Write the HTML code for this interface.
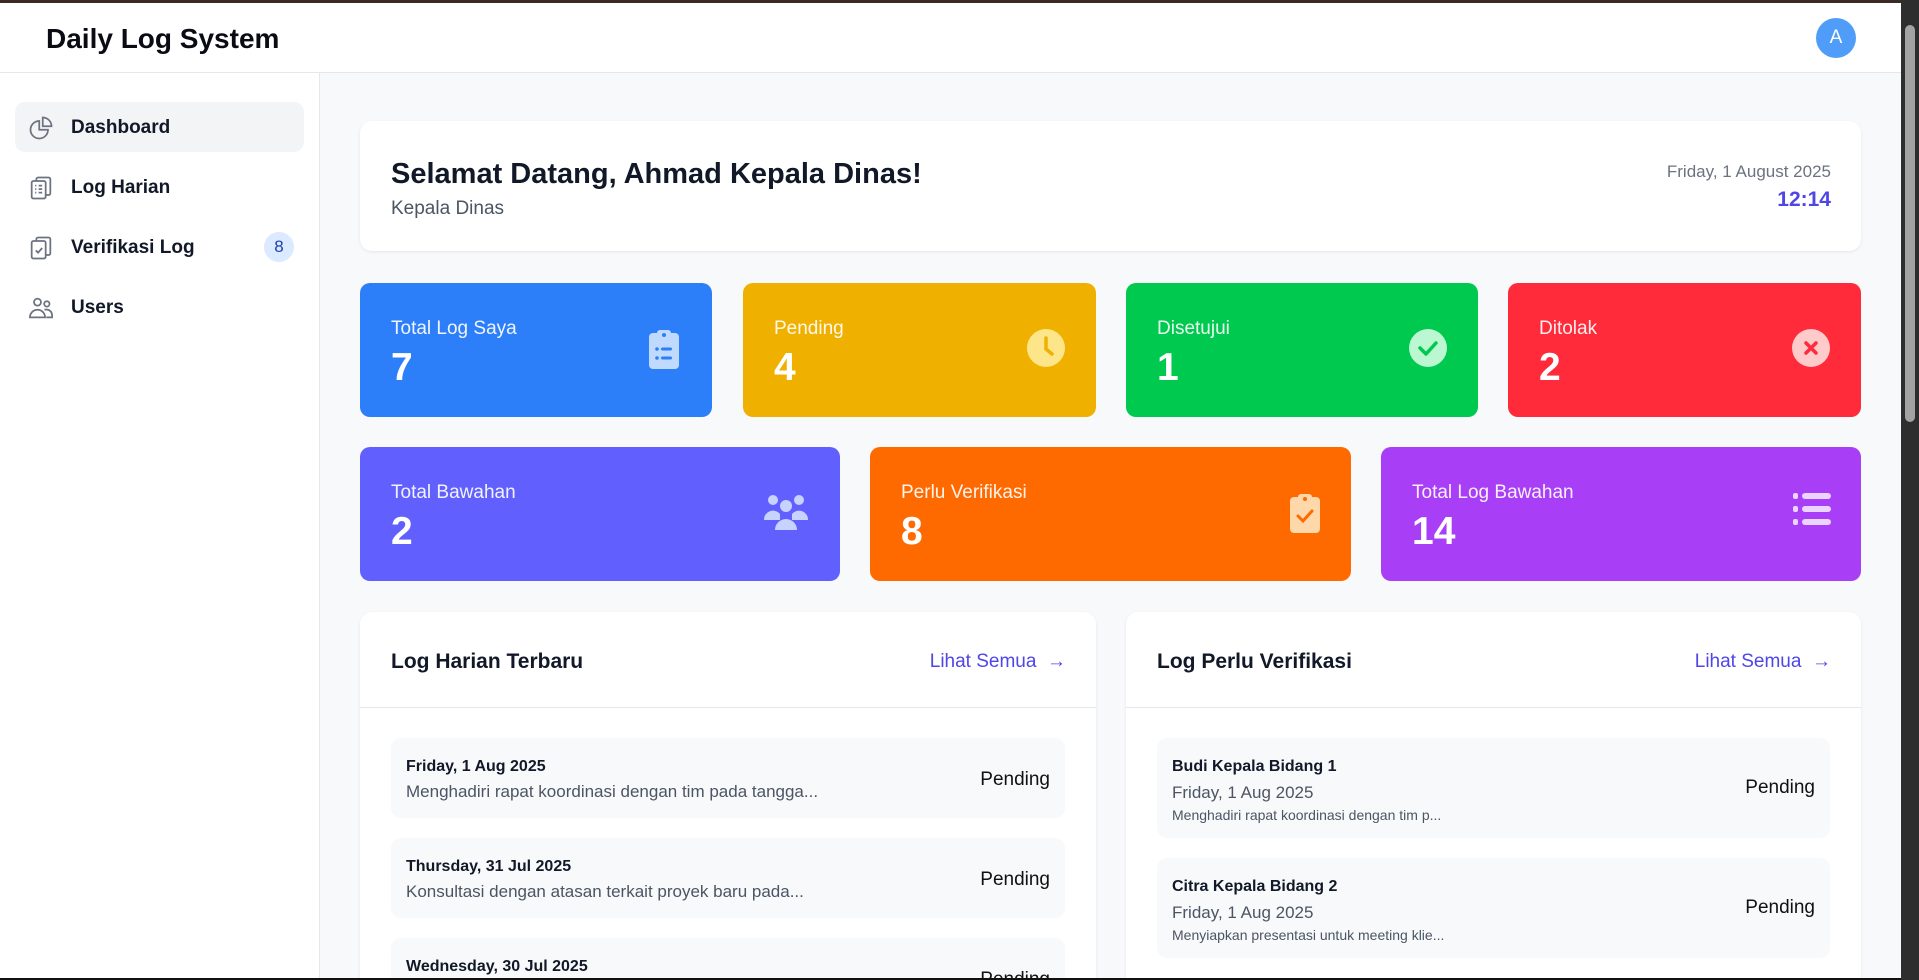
<!DOCTYPE html>
<html><head><meta charset="utf-8"><style>
*{box-sizing:border-box;margin:0;padding:0}
html,body{width:1919px;height:980px;overflow:hidden;font-family:"Liberation Sans",sans-serif;background:#f8f9fb;color:#111827}
#w{position:relative;width:1919px;height:980px;overflow:hidden}
.top{position:absolute;left:0;top:0;width:1901px;height:3px;background:#3a2a22}
.bot{position:absolute;left:0;bottom:0;width:1901px;height:2px;background:#111}
.header{position:absolute;left:0;top:3px;width:1901px;height:70px;background:#fff;border-bottom:1px solid #e5e7eb}
.header h1{position:absolute;left:46px;top:20px;font-size:28px;font-weight:600;color:#0b0b14}
.av{position:absolute;left:1816px;top:15px;width:40px;height:40px;border-radius:50%;background:#4f9cf9;color:#fff;font-size:19px;text-align:center;line-height:40px}
.sb{position:absolute;left:0;top:73px;width:320px;height:905px;background:#fff;border-right:1px solid #e5e7eb}
.nav{position:absolute;left:15px;width:289px;height:50px;border-radius:10px;font-size:19px;font-weight:600;color:#111827}
.nav span.t{position:absolute;left:56px;top:15px}
.nav svg{position:absolute;left:12px;top:12px}
.badge{position:absolute;right:10px;top:10px;width:30px;height:30px;border-radius:50%;background:#dbeafe;color:#1e40af;font-size:17px;text-align:center;line-height:30px;font-weight:400}
.scroll{position:absolute;left:1901px;top:0;width:18px;height:980px;background:#2e2e2e}
.thumb{position:absolute;left:1905px;top:25px;width:10px;height:397px;border-radius:5px;background:#a3a3a3}
.card{position:absolute;background:#fff;border-radius:12px;box-shadow:0 1px 3px rgba(0,0,0,.08);overflow:hidden}
.stat{position:absolute;border-radius:10px;color:#fff}
.stat .l{position:absolute;left:31px;top:35px;font-size:19px;opacity:.92}
.stat .n{position:absolute;left:31px;top:63px;font-size:39px;font-weight:700}
.stat svg{position:absolute;right:30px;top:45px}
.ph{position:absolute;left:0;top:0;right:0;height:96px;border-bottom:1px solid #e5e7eb}
.ph .t{position:absolute;left:31px;top:38px;font-size:21px;font-weight:600}
.ph .a{position:absolute;right:30px;top:39px;font-size:19px;color:#4f46e5}
.it{position:absolute;left:31px;right:31px;background:#f8f9fb;border-radius:10px}
.it .d{position:absolute;left:15px;font-size:16px;font-weight:700}
.it .s{position:absolute;left:15px;font-size:17px;color:#4b5563}
.it .p{position:absolute;right:15px;font-size:19px;color:#111}
</style></head><body><div id="w">
<div class="top"></div>
<div class="header"><h1>Daily Log System</h1><div class="av">A</div></div>
<div class="sb">
 <div class="nav" style="top:29px;background:#f3f4f6"><svg width="28" height="28" viewBox="0 0 24 24" fill="none" stroke="#6b7280" stroke-width="1.5"><path d="M10.5 6a7.5 7.5 0 1 0 7.5 7.5h-7.5V6z"/><path d="M13.5 10.5H21A7.5 7.5 0 0 0 13.5 3v7.5z"/></svg><span class="t">Dashboard</span></div>
 <div class="nav" style="top:89px"><svg width="28" height="28" viewBox="0 0 24 24" fill="none" stroke="#6b7280" stroke-width="1.5"><rect x="4" y="6" width="12" height="15" rx="1.5"/><path d="M8 6V4.5A1.5 1.5 0 0 1 9.5 3h9A1.5 1.5 0 0 1 20 4.5v12a1.5 1.5 0 0 1-1.5 1.5H16"/><path d="M7 10h1M10 10h3M7 13h1M10 13h3M7 16h1M10 16h3"/></svg><span class="t">Log Harian</span></div>
 <div class="nav" style="top:149px"><svg width="28" height="28" viewBox="0 0 24 24" fill="none" stroke="#6b7280" stroke-width="1.5"><rect x="4" y="6" width="12" height="15" rx="1.5"/><path d="M8 6V4.5A1.5 1.5 0 0 1 9.5 3h9A1.5 1.5 0 0 1 20 4.5v12a1.5 1.5 0 0 1-1.5 1.5H16"/><path d="M7.5 14l2 2 3.5-4"/></svg><span class="t">Verifikasi Log</span><div class="badge">8</div></div>
 <div class="nav" style="top:209px"><svg width="28" height="28" viewBox="0 0 24 24" fill="none" stroke="#6b7280" stroke-width="1.5"><circle cx="9" cy="7" r="3"/><circle cx="17" cy="8.5" r="2.3"/><path d="M2.5 20a6.5 6.5 0 0 1 13 0z"/><path d="M15 13.5a5 5 0 0 1 6.5 4.5V20h-5"/></svg><span class="t">Users</span></div>
</div>

<div class="card" style="left:360px;top:121px;width:1501px;height:130px">
 <div style="position:absolute;left:31px;top:37px;font-size:29px;font-weight:700;color:#111827">Selamat Datang, Ahmad Kepala Dinas!</div>
 <div style="position:absolute;left:31px;top:77px;font-size:19px;color:#4b5563">Kepala Dinas</div>
 <div style="position:absolute;right:30px;top:41px;font-size:17px;color:#6b7280">Friday, 1 August 2025</div>
 <div style="position:absolute;right:30px;top:67px;font-size:21px;font-weight:700;color:#4f46e5">12:14</div>
</div>

<div class="stat" style="left:360px;top:283px;width:352px;height:134px;background:#2d7ff9"><div class="l">Total Log Saya</div><div class="n">7</div>
<svg width="36" height="42" viewBox="0 0 36 42"><rect x="3" y="5" width="30" height="36" rx="4" fill="#bfd9ff"/><rect x="11" y="2" width="14" height="8" rx="3" fill="#bfd9ff"/><circle cx="18" cy="7" r="2" fill="#2d7ff9"/><circle cx="11" cy="21" r="1.8" fill="#2d7ff9"/><circle cx="11" cy="30" r="1.8" fill="#2d7ff9"/><rect x="15" y="19.5" width="11" height="3" rx="1.5" fill="#2d7ff9"/><rect x="15" y="28.5" width="11" height="3" rx="1.5" fill="#2d7ff9"/></svg></div>
<div class="stat" style="left:743px;top:283px;width:353px;height:134px;background:#f0b000"><div class="l">Pending</div><div class="n">4</div>
<svg width="40" height="40" viewBox="0 0 40 40"><circle cx="20" cy="20" r="19" fill="#fde68a"/><path d="M20 10v11l6 5" stroke="#f0b000" stroke-width="3.5" fill="none" stroke-linecap="round"/></svg></div>
<div class="stat" style="left:1126px;top:283px;width:352px;height:134px;background:#00c94f"><div class="l">Disetujui</div><div class="n">1</div>
<svg width="40" height="40" viewBox="0 0 40 40"><circle cx="20" cy="20" r="19" fill="#bbf7d0"/><path d="M12 20l6 6 10-11" stroke="#00c94f" stroke-width="3.5" fill="none" stroke-linecap="round" stroke-linejoin="round"/></svg></div>
<div class="stat" style="left:1508px;top:283px;width:353px;height:134px;background:#ff2a3a"><div class="l">Ditolak</div><div class="n">2</div>
<svg width="40" height="40" viewBox="0 0 40 40"><circle cx="20" cy="20" r="19" fill="#fecaca"/><path d="M15 15l10 10M25 15l-10 10" stroke="#ff2a3a" stroke-width="3.5" stroke-linecap="round"/></svg></div>

<div class="stat" style="left:360px;top:447px;width:480px;height:134px;background:#6160ff"><div class="l">Total Bawahan</div><div class="n">2</div>
<svg width="48" height="40" viewBox="0 0 48 40"><circle cx="11" cy="8" r="5" fill="#c7d2fe"/><circle cx="37" cy="8" r="5" fill="#c7d2fe"/><circle cx="24" cy="14" r="6" fill="#c7d2fe"/><path d="M2 28a9 9 0 0 1 16-6v6z" fill="#c7d2fe"/><path d="M46 28a9 9 0 0 0-16-6v6z" fill="#c7d2fe"/><path d="M13 38a11 11 0 0 1 22 0z" fill="#c7d2fe"/></svg></div>
<div class="stat" style="left:870px;top:447px;width:481px;height:134px;background:#ff6a00"><div class="l">Perlu Verifikasi</div><div class="n">8</div>
<svg width="32" height="42" viewBox="0 0 32 42"><rect x="1" y="5" width="30" height="36" rx="4" fill="#fed7aa"/><rect x="9" y="2" width="14" height="8" rx="3" fill="#fed7aa"/><circle cx="16" cy="7" r="2" fill="#ff6a00"/><path d="M9 24l5 5 9-10" stroke="#ff6a00" stroke-width="3" fill="none" stroke-linecap="round"/></svg></div>
<div class="stat" style="left:1381px;top:447px;width:480px;height:134px;background:#a83ff6"><div class="l">Total Log Bawahan</div><div class="n">14</div>
<svg width="38" height="34" viewBox="0 0 38 34"><g fill="#e9d5ff"><rect x="0" y="1" width="5" height="6" rx="2"/><rect x="0" y="14" width="5" height="6" rx="2"/><rect x="0" y="27" width="5" height="6" rx="2"/><rect x="9" y="1" width="29" height="6" rx="3"/><rect x="9" y="14" width="29" height="6" rx="3"/><rect x="9" y="27" width="29" height="6" rx="3"/></g></svg></div>

<div class="card" style="left:360px;top:612px;width:736px;height:366px;border-radius:12px 12px 0 0">
 <div class="ph"><div class="t">Log Harian Terbaru</div><div class="a">Lihat Semua&nbsp;&nbsp;<span style="font-weight:700">→</span></div></div>
 <div class="it" style="top:126px;height:80px"><div class="d" style="top:20px">Friday, 1 Aug 2025</div><div class="s" style="top:44px">Menghadiri rapat koordinasi dengan tim pada tangga...</div><div class="p" style="top:31px">Pending</div></div>
 <div class="it" style="top:226px;height:80px"><div class="d" style="top:20px">Thursday, 31 Jul 2025</div><div class="s" style="top:44px">Konsultasi dengan atasan terkait proyek baru pada...</div><div class="p" style="top:31px">Pending</div></div>
 <div class="it" style="top:326px;height:80px"><div class="d" style="top:20px">Wednesday, 30 Jul 2025</div><div class="p" style="top:31px">Pending</div></div>
</div>
<div class="card" style="left:1126px;top:612px;width:735px;height:366px;border-radius:12px 12px 0 0">
 <div class="ph"><div class="t">Log Perlu Verifikasi</div><div class="a">Lihat Semua&nbsp;&nbsp;<span style="font-weight:700">→</span></div></div>
 <div class="it" style="top:126px;height:100px"><div class="d" style="top:20px">Budi Kepala Bidang 1</div><div class="s" style="top:45px">Friday, 1 Aug 2025</div><div class="s" style="top:69px;font-size:14px">Menghadiri rapat koordinasi dengan tim p...</div><div class="p" style="top:39px">Pending</div></div>
 <div class="it" style="top:246px;height:100px"><div class="d" style="top:20px">Citra Kepala Bidang 2</div><div class="s" style="top:45px">Friday, 1 Aug 2025</div><div class="s" style="top:69px;font-size:14px">Menyiapkan presentasi untuk meeting klie...</div><div class="p" style="top:39px">Pending</div></div>
</div>

<div class="scroll"></div><div class="thumb"></div>
<div class="bot"></div>
</div></body></html>
